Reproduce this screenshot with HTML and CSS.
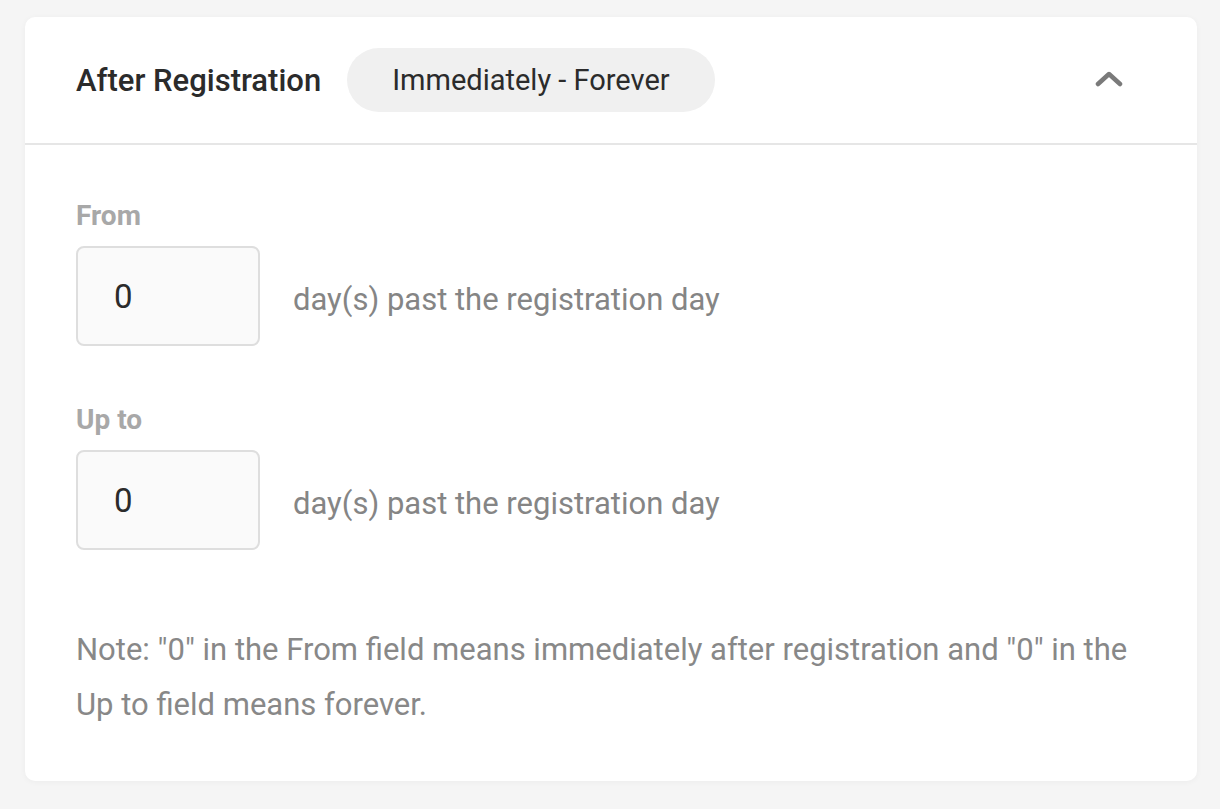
FILE: index.html
```html
<!DOCTYPE html>
<html lang="en">
<head>
    <meta charset="UTF-8">
    <meta name="viewport" content="width=device-width, initial-scale=1.0">
    <title>After Registration</title>
    <link rel="stylesheet" href="styles.css">
</head>
<body>
    <div class="panel">
        <div class="panel-header">
            <h2 class="panel-title">After Registration</h2>
            <span class="range-pill">Immediately - Forever</span>
            <button class="collapse-btn" aria-label="Collapse">
                <svg width="28" height="18" viewBox="0 0 28 18">
                    <path d="M3 13 L14 3 L25 13" fill="none" stroke="#7a7a7a" stroke-width="4.5" stroke-linecap="round" stroke-linejoin="round"/>
                </svg>
            </button>
        </div>
        <div class="panel-body">
            <div class="field">
                <label class="field-label" for="from-days">From</label>
                <div class="field-row">
                    <input class="day-input" id="from-days" type="text" value="0">
                    <span class="field-suffix">day(s) past the registration day</span>
                </div>
            </div>
            <div class="field">
                <label class="field-label" for="upto-days">Up to</label>
                <div class="field-row">
                    <input class="day-input" id="upto-days" type="text" value="0">
                    <span class="field-suffix">day(s) past the registration day</span>
                </div>
            </div>
            <p class="note">Note: "0" in the From field means immediately after registration and "0" in the Up to field means forever.</p>
        </div>
    </div>
</body>
</html>
```

FILE: styles.css
```css
body {
    margin: 0;
    padding: 17px 23px 28px 25px;
    background-color: #f5f5f5;
    font-family: Roboto, "Liberation Sans", sans-serif;
    color: #333;
}
.panel {
    background-color: #fff;
    border-radius: 10px;
    box-shadow: 0 1px 6px rgba(0,0,0,0.04);
}
.panel-header {
    display: flex;
    align-items: center;
    height: 126px;
    padding: 0 51px;
    border-bottom: 2px solid #e6e6e6;
}
.panel-title {
    margin: 0;
    font-size: 31px;
    font-weight: 500;
    color: #2b2b2b;
}
.range-pill {
    margin-left: 26px;
    padding: 0 45px;
    height: 64px;
    line-height: 64px;
    border-radius: 32px;
    background-color: #f0f0f0;
    font-size: 29px;
    font-weight: 400;
    color: #2b2b2b;
}
.collapse-btn {
    margin-left: auto;
    margin-right: 23px;
    padding: 0;
    border: none;
    background: none;
    cursor: pointer;
    display: flex;
}
.panel-body {
    padding: 54px 51px 49px;
}
.field {
    margin-bottom: 57px;
}
.field-label {
    display: block;
    font-size: 28px;
    font-weight: 700;
    color: #a8a8a8;
    margin-bottom: 14px;
}
.field-row {
    display: flex;
    align-items: center;
}
.day-input {
    box-sizing: border-box;
    width: 184px;
    height: 100px;
    padding: 0 36px;
    border: 2px solid #dedede;
    border-radius: 8px;
    background-color: #fafafa;
    font-family: inherit;
    font-size: 33px;
    color: #2b2b2b;
    outline: none;
}
.field-suffix {
    margin-left: 33px;
    padding-top: 6px;
    font-size: 31px;
    color: #858585;
}
.note {
    margin: 72px 0 0;
    font-size: 31px;
    line-height: 55px;
    color: #888;
}
```
